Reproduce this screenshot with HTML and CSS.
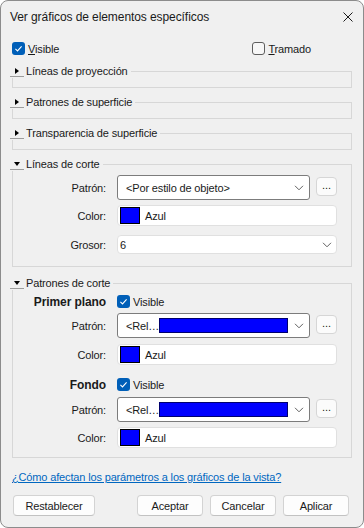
FILE: index.html
```html
<!DOCTYPE html>
<html>
	<head>
		<meta charset="UTF-8">
		<title>Ver gráficos de elementos específicos</title>
		<link rel="stylesheet" href="styles.css">
	</head>
	<body>
		<div class="window">
			<div class="titlebar">
				<span class="title">Ver gráficos de elementos específicos</span>
				<svg class="close" width="10" height="10" viewBox="0 0 10 10"><path d="M0.5 0.5 L9.5 9.5 M9.5 0.5 L0.5 9.5" stroke="#1b1b1b" stroke-width="1" fill="none"/></svg>
			</div>
			<div class="content">
				<!-- casillas superiores -->
				<div class="toprow">
					<label class="check">
						<svg width="13" height="13" viewBox="0 0 13 13"><rect x="0" y="0" width="13" height="13" rx="3" fill="#005fb8"/><path d="M3.4 6.9 L5.5 8.9 L9.6 4.4" stroke="#fff" stroke-width="1.1" fill="none"/></svg>
						<span><u>V</u>isible</span>
					</label>
					<label class="check tramado">
						<svg width="13" height="13" viewBox="0 0 13 13"><rect x="0.5" y="0.5" width="12" height="12" rx="2.5" fill="#f7f7f7" stroke="#5e5e5e"/></svg>
						<span><u>T</u>ramado</span>
					</label>
				</div>

				<fieldset class="group collapsed">
					<legend><span class="toggle"><i class="tri-right"></i></span>Líneas de proyección</legend>
				</fieldset>
				<fieldset class="group collapsed">
					<legend><span class="toggle"><i class="tri-right"></i></span>Patrones de superficie</legend>
				</fieldset>
				<fieldset class="group collapsed">
					<legend><span class="toggle"><i class="tri-right"></i></span>Transparencia de superficie</legend>
				</fieldset>

				<fieldset class="group corte">
					<legend><span class="toggle"><i class="tri-down"></i></span>Líneas de corte</legend>
					<div class="row">
						<span class="lbl">Patrón:</span>
						<div class="combo">
							<span>&lt;Por estilo de objeto&gt;</span>
							<svg class="chev" width="10" height="6" viewBox="0 0 10 6"><path d="M1 0.8 L5 4.8 L9 0.8" stroke="#616161" stroke-width="1" fill="none"/></svg>
						</div>
						<button class="dots">...</button>
					</div>
					<div class="row gap5">
						<span class="lbl">Color:</span>
						<div class="colorfield"><span class="swatch"></span><span>Azul</span></div>
					</div>
					<div class="row gap9">
						<span class="lbl">Grosor:</span>
						<div class="select">
							<span>6</span>
							<svg class="chev" width="10" height="6" viewBox="0 0 10 6"><path d="M1 0.8 L5 4.8 L9 0.8" stroke="#616161" stroke-width="1" fill="none"/></svg>
						</div>
					</div>
				</fieldset>

				<fieldset class="group patrones">
					<legend><span class="toggle"><i class="tri-down"></i></span>Patrones de corte</legend>
					<div class="row checkrow">
						<span class="lbl bold">Primer plano</span>
						<label class="check">
							<svg width="13" height="13" viewBox="0 0 13 13"><rect x="0" y="0" width="13" height="13" rx="3" fill="#005fb8"/><path d="M3.4 6.9 L5.5 8.9 L9.6 4.4" stroke="#fff" stroke-width="1.1" fill="none"/></svg>
							<span>Visible</span>
						</label>
					</div>
					<div class="row gap4">
						<span class="lbl">Patrón:</span>
						<div class="combo">
							<span class="rel">&lt;Rel…</span>
							<span class="bar"></span>
							<svg class="chev" width="10" height="6" viewBox="0 0 10 6"><path d="M1 0.8 L5 4.8 L9 0.8" stroke="#616161" stroke-width="1" fill="none"/></svg>
						</div>
						<button class="dots">...</button>
					</div>
					<div class="row gap6">
						<span class="lbl">Color:</span>
						<div class="colorfield"><span class="swatch"></span><span>Azul</span></div>
					</div>
					<div class="row checkrow gap12">
						<span class="lbl bold">Fondo</span>
						<label class="check">
							<svg width="13" height="13" viewBox="0 0 13 13"><rect x="0" y="0" width="13" height="13" rx="3" fill="#005fb8"/><path d="M3.4 6.9 L5.5 8.9 L9.6 4.4" stroke="#fff" stroke-width="1.1" fill="none"/></svg>
							<span>Visible</span>
						</label>
					</div>
					<div class="row gap5">
						<span class="lbl">Patrón:</span>
						<div class="combo">
							<span class="rel">&lt;Rel…</span>
							<span class="bar"></span>
							<svg class="chev" width="10" height="6" viewBox="0 0 10 6"><path d="M1 0.8 L5 4.8 L9 0.8" stroke="#616161" stroke-width="1" fill="none"/></svg>
						</div>
						<button class="dots">...</button>
					</div>
					<div class="row gap5">
						<span class="lbl">Color:</span>
						<div class="colorfield"><span class="swatch"></span><span>Azul</span></div>
					</div>
				</fieldset>

				<a class="help" href="#">¿Cómo afectan los parámetros a los gráficos de la vista?</a>

				<div class="buttons">
					<button class="btn wide">Restablecer</button>
					<span class="spacer"></span>
					<button class="btn">Aceptar</button>
					<button class="btn">Cancelar</button>
					<button class="btn">Aplicar</button>
				</div>
			</div>
		</div>
	</body>
</html>
```
FILE: styles.css
```css
html,body{
	margin: 0;
	padding: 0;
	background: #fff;
}
body{
	font-family: "Liberation Sans", Arial, sans-serif;
	font-size: 11px;
	letter-spacing: -0.15px;
	color: #1a1a1a;
}
.window{
	width: 364px;
	height: 528px;
	box-sizing: border-box;
	border: 1px solid #8c8c8c;
	border-radius: 8px;
	background: #f0f0f0;
	overflow: hidden;
}
.titlebar{
	height: 31px;
	display: flex;
	align-items: center;
	padding: 0 10px 0 9px;
}
.title{
	font-size: 12px;
	letter-spacing: -0.08px;
	flex: 1;
}
.close{
	display: block;
}
.content{
	padding: 9px 11px 0;
}
.toprow{
	display: flex;
	height: 15px;
	align-items: center;
}
.check{
	display: flex;
	align-items: center;
}
.check svg{
	display: block;
	margin-right: 3px;
}
.tramado{
	margin-left: auto;
	margin-right: 41px;
}

/* grupos */
.group{
	margin: 7px 0 0;
	padding: 0 0 9px 0;
	border: 1px solid #d7d7d7;
	min-width: 0;
}
.toprow + .group{
	margin-top: 8px;
}
.group legend{
	margin-left: -3px;
	padding: 0 3px 0 0;
	height: 14px;
	display: flex;
	align-items: center;
}
.toggle{
	width: 14px;
	height: 12px;
	box-sizing: border-box;
	border-bottom: 1px solid #9c9c9c;
	display: flex;
	align-items: center;
	justify-content: center;
	margin-right: 2px;
}
.tri-right{
	width: 0;
	height: 0;
	border-left: 4px solid #000;
	border-top: 3.5px solid transparent;
	border-bottom: 3.5px solid transparent;
	margin-left: -1px;
}
.tri-down{
	width: 0;
	height: 0;
	border-top: 4px solid #000;
	border-left: 3.5px solid transparent;
	border-right: 3.5px solid transparent;
	margin-left: -1px;
}
.corte{
	padding: 4px 13px 12px 0;
}
.patrones{
	margin-top: 9px;
	padding: 4px 13px 9px 0;
}

/* filas */
.row{
	display: flex;
	align-items: center;
}
.gap4{ margin-top: 4px; }
.gap5{ margin-top: 5px; }
.gap6{ margin-top: 6px; }
.gap9{ margin-top: 9px; }
.gap12{ margin-top: 12px; }
.lbl{
	width: 93px;
	margin-right: 11px;
	text-align: right;
	flex: none;
}
.bold{
	font-weight: bold;
	font-size: 12px;
	letter-spacing: -0.1px;
}
.checkrow{
	height: 15px;
}
.combo{
	width: 193px;
	height: 25px;
	box-sizing: border-box;
	border: 1px solid #7c7c7c;
	border-radius: 3px;
	background: #fff;
	display: flex;
	align-items: center;
	padding: 0 5px 0 8px;
}
.combo .chev{
	margin-left: auto;
}
.rel{
	width: 33px;
	flex: none;
}
.bar{
	width: 129px;
	height: 15px;
	box-sizing: border-box;
	background: #0000ff;
	border: 1px solid #00006e;
}
.dots{
	align-self: flex-start;
	margin: 2px 0 0 6px;
	width: 21px;
	height: 19px;
	padding: 0 0 3px;
	box-sizing: border-box;
	border: 1px solid #d6d6d6;
	border-radius: 4px;
	background: #fbfbfb;
	font-family: inherit;
	font-size: 11px;
	letter-spacing: 0;
	color: #1a1a1a;
	line-height: 1;
}
.colorfield{
	width: 220px;
	height: 21px;
	box-sizing: border-box;
	border: 1px solid #e0e0e0;
	border-radius: 4px;
	background: #fff;
	display: flex;
	align-items: center;
	padding-left: 2px;
}
.swatch{
	width: 20px;
	height: 17px;
	box-sizing: border-box;
	background: #0000ff;
	border: 1px solid #000;
	margin-right: 5px;
}
.select{
	width: 220px;
	height: 19px;
	box-sizing: border-box;
	border: 1px solid #e0e0e0;
	border-radius: 4px;
	background: #fff;
	display: flex;
	align-items: center;
	justify-content: space-between;
	padding: 0 4px 0 2px;
}
.chev{
	display: block;
}

/* pie */
.help{
	display: block;
	margin-top: 12px;
	line-height: 14px;
	color: #0067c0;
	text-decoration: underline;
	width: max-content;
}
.buttons{
	display: flex;
	margin-top: 11px;
	padding: 0 3px 0 1px;
}
.spacer{
	flex: 1;
}
.btn{
	width: 66px;
	height: 21px;
	margin-left: 7px;
	box-sizing: border-box;
	border: 1px solid #d3d3d3;
	border-bottom-color: #c2c2c2;
	border-radius: 4px;
	background: #fdfdfd;
	font-family: inherit;
	font-size: 11px;
	letter-spacing: -0.15px;
	color: #1a1a1a;
	padding: 0;
}
.btn.wide{
	width: 82px;
	margin-left: 0;
}
```
